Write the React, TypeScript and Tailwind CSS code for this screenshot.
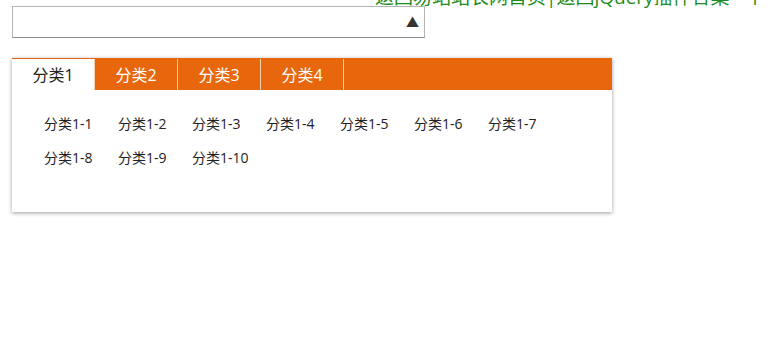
import { useState } from "react";

const tabs = ["分类1", "分类2", "分类3", "分类4"];

export default function App() {
  const [active, setActive] = useState(0);
  const items = Array.from({ length: 10 }, (_, i) => `分类${active + 1}-${i + 1}`);

  return (
    <div className="relative min-h-[355px] w-[770px] overflow-hidden bg-white font-['Open_Sans','Noto_Sans_CJK_SC',sans-serif]">
      <div className="absolute left-[375px] top-[-14px] whitespace-nowrap text-[19px] leading-[22px] text-[#1e8c1e]">
        返回易站站长网首页|返回jQuery插件合集 - 个
      </div>

      <div className="pl-[12px] pt-[6px]">
        <div className="flex h-[32px] w-[413px] items-center justify-end border border-[#b4b4b4] border-b-[#8a8a8a] bg-white pr-[5px]">
          <span className="text-[13px] leading-none text-[#333]">▲</span>
        </div>
      </div>

      <div className="ml-[12px] mt-[20px] w-[600px] bg-white shadow-[0_1px_4px_rgba(0,0,0,0.4)]">
        <div className="flex h-[32px] border-t border-[#e8670c] bg-[#e8670c]">
          {tabs.map((t, i) => (
            <button
              key={t}
              onClick={() => setActive(i)}
              className={`flex h-full w-[83px] items-center justify-center border-r border-[#f5d2ad] text-[16px] ${
                active === i ? "bg-white text-[#222]" : "text-white"
              }`}
            >
              {t}
            </button>
          ))}
        </div>
        <div className="flex flex-wrap px-[32px] pb-[37px] pt-[17px]">
          {items.map((it) => (
            <div key={it} className="h-[34px] w-[74px] text-[14px] leading-[34px] text-[#222]">
              {it}
            </div>
          ))}
        </div>
      </div>
    </div>
  );
}
